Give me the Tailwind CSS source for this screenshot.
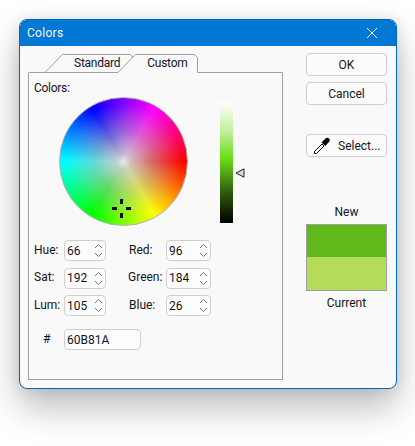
<!DOCTYPE html>
<html lang="en">
<head>
  <meta charset="UTF-8" />
  <title>Colors</title>
  <script src="https://cdn.jsdelivr.net/npm/@tailwindcss/browser@4"></script>
</head>
<body class="bg-white text-[#14141e] text-[12px] leading-none font-['Roboto',sans-serif] overflow-hidden">
  <div class="w-[415px] h-[446px] pl-[19px] pt-[19px]">
    <!-- window -->
    <div class="w-[378px] h-[370px] flex flex-col rounded-[8px] border border-[#0067c0] bg-[#f9f9f9] shadow-[0_18px_36px_rgba(0,0,0,0.27),0_0_14px_rgba(0,0,0,0.10)]">
      <div class="h-[26px] shrink-0 rounded-t-[7px] bg-[#0078d4] flex items-center justify-between pl-[7px] pr-[19px] text-[#f4f9fd] tracking-[0.3px]">
        <span>Colors</span>
        <svg width="10" height="10" viewBox="0 0 10 10" fill="none" stroke="white" stroke-width="1"><path d="M0 0L10 10M10 0L0 10"/></svg>
      </div>
      <div class="flex flex-1 pl-[8px]">
        <!-- left side: tabs + panel -->
        <div class="w-[255px] flex flex-col pt-[8px]">
          <div class="relative h-[19px] shrink-0">
            <svg class="absolute left-0 top-0" width="255" height="20" viewBox="0 0 255 20" fill="none" stroke="#a0a0a0" stroke-width="1">
              <path d="M17 18.500L34.500 .5H102L105 3"/>
              <path d="M90 18.500L107.500 .5H166.500L169.500 3.500V18.500H254.500"/>
              <path d="M.5 18.500H90"/>
            </svg>
            <div class="relative flex">
              <span class="ml-[46px] mt-[3px] tracking-[-0.25px]">Standard</span>
              <span class="ml-[27px] mt-[3px] tracking-[-0.25px]">Custom</span>
            </div>
          </div>
          <div class="h-[307px] border border-t-0 border-[#a0a0a0] pl-[5px] pt-[9px]">
            <div class="tracking-[-0.3px]">Colors:</div>
            <div class="flex mt-[3px]">
              <div class="relative w-[129px] h-[129px] ml-[25px] rounded-full border border-[#b0b0b0] bg-[conic-gradient(from_90deg,#ff0000,#ffff00,#00ff00,#00ffff,#0000ff,#ff00ff,#ff0000)]">
                <div class="absolute inset-0 rounded-full bg-[radial-gradient(circle_closest-side,#e8e8e8_0%,rgba(205,205,205,0.9)_12%,rgba(185,185,185,0.55)_45%,rgba(170,170,170,0)_92%)]"></div>
                <!-- crosshair -->
                <svg class="absolute left-[52px] top-[101px]" width="19" height="19" viewBox="0 0 19 19" fill="black"><rect x="8" y="0" width="3" height="5"/><rect x="8" y="14" width="3" height="5"/><rect x="0" y="8" width="5" height="3"/><rect x="14" y="8" width="5" height="3"/></svg>
              </div>
              <div class="w-[13px] h-[121px] ml-[32px] mt-[5px] bg-[linear-gradient(#ffffff_0%,#c0ee9a_25%,#66dd11_47%,#5ab818_55%,#2e5a0c_75%,#000000_100%)]"></div>
              <svg class="mt-[71px] ml-[2px]" width="10" height="10" viewBox="0 0 10 10"><path d="M1 5L9 .8V9.200Z" fill="#d8d8d8" stroke="#222" stroke-width="1"/></svg>
            </div>
            <!-- fields -->
            <div class="grid grid-cols-[30px_42px_23px_37px_45px] grid-rows-[21px_21px_21px] gap-y-[6.500px] mt-[14px] items-center">
              <span class="-mt-[2px]">Hue:</span>
              <div class="flex items-center justify-between h-[21px] border border-[#cfcfcf] rounded-[4px] bg-[#fdfdfd] pl-[2px] pr-[2px]"><span>66</span><svg width="9" height="15" viewBox="0 0 9 15" fill="none" stroke="#777"><path d="M1 5L4.500 1.500L8 5M1 10L4.500 13.500L8 10"/></svg></div>
              <span></span>
              <span class="-mt-[2px]">Red:</span>
              <div class="flex items-center justify-between h-[21px] border border-[#cfcfcf] rounded-[4px] bg-[#fdfdfd] pl-[2px] pr-[2px]"><span>96</span><svg width="9" height="15" viewBox="0 0 9 15" fill="none" stroke="#777"><path d="M1 5L4.500 1.500L8 5M1 10L4.500 13.500L8 10"/></svg></div>
              <span class="-mt-[2px]">Sat:</span>
              <div class="flex items-center justify-between h-[21px] border border-[#cfcfcf] rounded-[4px] bg-[#fdfdfd] pl-[2px] pr-[2px]"><span>192</span><svg width="9" height="15" viewBox="0 0 9 15" fill="none" stroke="#777"><path d="M1 5L4.500 1.500L8 5M1 10L4.500 13.500L8 10"/></svg></div>
              <span></span>
              <span class="-mt-[2px] -ml-[1px]">Green:</span>
              <div class="flex items-center justify-between h-[21px] border border-[#cfcfcf] rounded-[4px] bg-[#fdfdfd] pl-[2px] pr-[2px]"><span>184</span><svg width="9" height="15" viewBox="0 0 9 15" fill="none" stroke="#777"><path d="M1 5L4.500 1.500L8 5M1 10L4.500 13.500L8 10"/></svg></div>
              <span class="-mt-[2px]">Lum:</span>
              <div class="flex items-center justify-between h-[21px] border border-[#cfcfcf] rounded-[4px] bg-[#fdfdfd] pl-[2px] pr-[2px]"><span>105</span><svg width="9" height="15" viewBox="0 0 9 15" fill="none" stroke="#777"><path d="M1 5L4.500 1.500L8 5M1 10L4.500 13.500L8 10"/></svg></div>
              <span></span>
              <span class="-mt-[2px]">Blue:</span>
              <div class="flex items-center justify-between h-[21px] border border-[#cfcfcf] rounded-[4px] bg-[#fdfdfd] pl-[2px] pr-[2px]"><span>26</span><svg width="9" height="15" viewBox="0 0 9 15" fill="none" stroke="#777"><path d="M1 5L4.500 1.500L8 5M1 10L4.500 13.500L8 10"/></svg></div>
            </div>
            <div class="flex items-center mt-[13px]">
              <span class="w-[30px] pl-[9px] -mt-[2px]">#</span>
              <div class="w-[77px] h-[21px] flex items-center border border-[#cfcfcf] rounded-[4px] bg-[#fdfdfd] pl-[2px]">60B81A</div>
            </div>
          </div>
        </div>
        <!-- right side -->
        <div class="w-[81px] ml-[23px] pt-[7px] flex flex-col">
          <div class="h-[23px] flex items-center justify-center border border-[#cfcfcf] rounded-[4px] bg-[#fbfbfb]">OK</div>
          <div class="h-[23px] mt-[6px] flex items-center justify-center border border-[#cfcfcf] rounded-[4px] bg-[#fbfbfb]">Cancel</div>
          <div class="h-[23px] mt-[29px] flex items-center border border-[#cfcfcf] rounded-[4px] bg-[#fbfbfb] pl-[6px]">
            <svg width="18" height="18" viewBox="0 0 18 18"><path d="M1.500 16.500V14.500L9 7L11 9L3.500 16.500Z" fill="white" stroke="black" stroke-width="1"/><path d="M8.500 5.500L10 4L12.500 1.500C13.500 .5 15 .5 16 1.500C17 2.500 17 4 16 5L14 7L12.500 9L8.500 5.500Z" fill="black"/></svg>
            <span class="ml-[7px]">Select...</span>
          </div>
          <div class="mt-[49px] text-center">New</div>
          <div class="mt-[6px] h-[67px] border-[1.500px] border-[#a0a0a0] flex flex-col">
            <div class="h-[32px] bg-[#60b81a]"></div>
            <div class="flex-1 bg-[#b4dc5a]"></div>
          </div>
          <div class="mt-[6px] text-center">Current</div>
        </div>
      </div>
    </div>
  </div>
</body>
</html>
